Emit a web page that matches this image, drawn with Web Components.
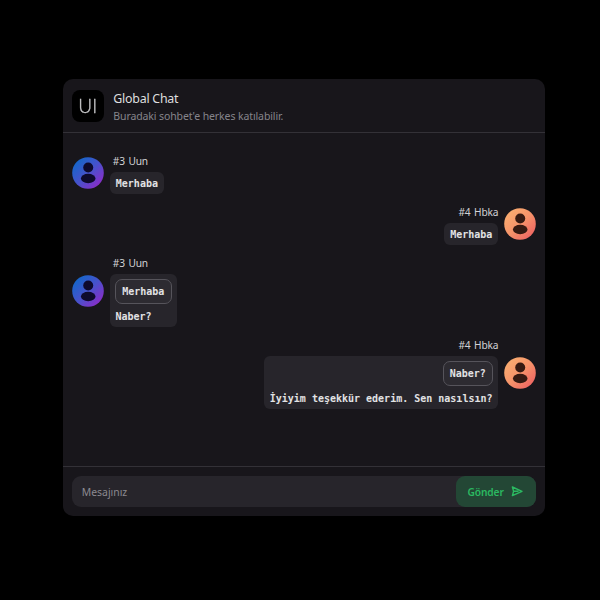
<!DOCTYPE html>
<html lang="tr">
<head>
<meta charset="utf-8">
<title>Global Chat</title>
<style>
html,body{margin:0;height:100%;background:#000}
body{display:flex;flex-direction:column;align-items:flex-start;padding:79.4px 0 0 62.8px;box-sizing:border-box;font-family:"Noto Sans","Open Sans",sans-serif;color:#dededf}
</style>
</head>
<body>
<chat-card>
  <chat-header slot="header"><span slot="title">Global Chat</span><span slot="desc">Buradaki sohbet'e herkes katılabilir.</span></chat-header>
  <chat-message name="#3 Uun" tone="blue">Merhaba</chat-message>
  <chat-message name="#4 Hbka" tone="orange" own>Merhaba</chat-message>
  <chat-message name="#3 Uun" tone="blue"><span slot="quote">Merhaba</span>Naber?</chat-message>
  <chat-message name="#4 Hbka" tone="orange" own><span slot="quote">Naber?</span>İyiyim teşekkür ederim. Sen nasılsın?</chat-message>
  <chat-composer slot="footer" placeholder="Mesajınız"><span>Gönder</span></chat-composer>
</chat-card>
<script>
class Base extends HTMLElement{
  connectedCallback(){ if(!this.shadowRoot) this.attachShadow({mode:'open'}).innerHTML=this.view(); }
}
customElements.define('chat-card',class extends Base{
  view(){return `<style>
  :host{display:flex;flex-direction:column;box-sizing:border-box;width:482.6px;height:437px;background:#18161b;border-radius:10px;overflow:hidden}
  main{flex:1;display:flex;flex-direction:column;gap:11px;padding:20.6px 9px 0}
  </style><slot name="header"></slot><main><slot></slot></main><slot name="footer"></slot>`}
});
customElements.define('chat-header',class extends Base{
  view(){return `<style>
  :host{display:flex;align-items:center;gap:10px;box-sizing:border-box;height:54px;padding:0 9px;border-bottom:1px solid #333137}
  .logo{box-sizing:border-box;width:31.5px;height:31.5px;border-radius:8px;background:#000;display:flex;align-items:center;justify-content:center;font:300 19px/32px Lato,sans-serif;color:#c4c4c6;-webkit-text-stroke:.3px #c4c4c6;will-change:transform}
  .copy{padding-top:2px}
  .t,.d{white-space:nowrap}
  .t{font-size:12.4px;line-height:18px;letter-spacing:-.24px}
  .d{font-size:10.5px;line-height:16px;letter-spacing:-.11px;color:#86858b}
  </style><div class="logo">UI</div><div class="copy"><div class="t"><slot name="title"></slot></div><div class="d"><slot name="desc"></slot></div></div>`}
});
customElements.define('user-avatar',class extends Base{
  view(){
    const o=this.getAttribute('tone')==='orange';
    return `<style>
  :host{display:block;width:32px;height:32px;flex:none}
  svg{display:block}
  </style><svg width="32" height="32" viewBox="0 0 32 32"><defs><linearGradient id="g" x1=".1" y1=".1" x2=".9" y2=".9"><stop offset="0" stop-color="${o?'#f9ad70':'#1167c9'}"/><stop offset=".5" stop-color="${o?'#f6936a':'#4752cb'}"/><stop offset="1" stop-color="${o?'#ee6462':'#8d2bc8'}"/></linearGradient></defs>
  <circle cx="16" cy="16" r="15.8" fill="url(#g)"/><g fill="${o?'#351a12':'#0e0a2d'}"><circle cx="16.2" cy="10.5" r="5"/><ellipse cx="16.2" cy="21.5" rx="7.3" ry="4.7"/></g></svg>`}
});
customElements.define('chat-message',class extends Base{
  view(){
    const own=this.hasAttribute('own'), q=!!this.querySelector('[slot=quote]');
    return `<style>
  :host{display:flex;align-items:center;gap:6px;flex-direction:${own?'row-reverse':'row'}}
  user-avatar{margin-bottom:${q?.6:2}px}
  .col{display:flex;flex-direction:column;align-items:${own?'flex-end':'flex-start'};gap:4px}
  .name{font-size:10.2px;line-height:14px;letter-spacing:-.15px;word-spacing:1px;padding:0 ${own?0:3}px;color:#d2d2d5}
  .bubble{box-sizing:border-box;display:flex;flex-direction:column;align-items:${own?'flex-end':'flex-start'};background:#27252b;border-radius:6px;padding:${q?'5px 5.4px 3.4px 5.2px':'5px 6px 3px'};font:bold 10px/14px "DejaVu Sans Mono",monospace;color:#e2e2e4;white-space:nowrap}
  .quote{box-sizing:border-box;height:25px;border:1px solid #56545b;border-radius:7px;background:#2d2b31;padding:4px 6.2px;line-height:15px;margin-bottom:5.6px}
  .text{padding:0 ${q?.5:0}px}
  </style><user-avatar tone="${this.getAttribute('tone')}"></user-avatar>
  <div class="col"><div class="name">${this.getAttribute('name')}</div><div class="bubble">${q?'<div class="quote"><slot name="quote"></slot></div>':''}<div class="text"><slot></slot></div></div></div>`}
});
customElements.define('chat-composer',class extends Base{
  view(){return `<style>
  :host{display:flex;box-sizing:border-box;height:50.6px;padding:9.6px 9px 9px;border-top:1px solid #333137}
  .bar{flex:1;display:flex;align-items:stretch;background:#27252b;border-radius:9px}
  .ph{flex:1;padding-left:10px;font-size:10.4px;line-height:32px;color:#8b8990}
  button{all:unset;box-sizing:border-box;width:80.6px;padding-right:2px;display:flex;align-items:center;justify-content:center;gap:7px;background:#234735;border-radius:9px;color:#2bb961;font-size:10.2px;font-weight:600;letter-spacing:-.1px}
  </style><div class="bar"><div class="ph">${this.getAttribute('placeholder')}</div><button><slot></slot><svg width="12" height="11" viewBox="0 0 12 11" fill="none" stroke="#2bb961" stroke-width="1.4" stroke-linejoin="round" stroke-linecap="round"><path d="M1.4 1 11 5.3 1.4 9.6 2.6 5.3ZM2.6 5.3H7"/></svg></button></div>`}
});
</script>
</body>
</html>
